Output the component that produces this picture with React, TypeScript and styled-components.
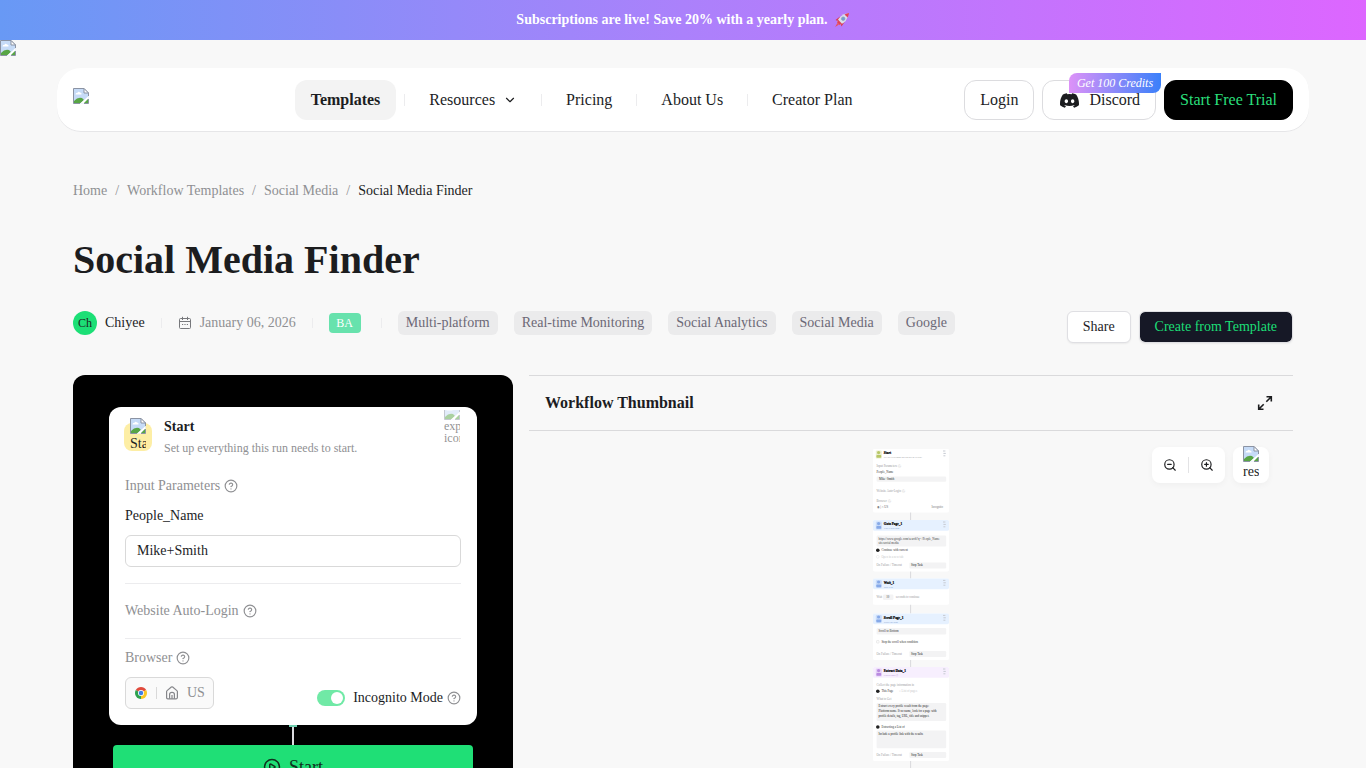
import React from "react";
import styled, { createGlobalStyle, css } from "styled-components";
import { ChevronDown, CircleHelp, ZoomIn, ZoomOut, CirclePlay } from "lucide-react";
import { BsDiscord } from "react-icons/bs";

const GlobalStyle = createGlobalStyle`
  *, *::before, *::after { box-sizing: border-box; }
  html { scrollbar-width: none; }
  body {
    margin: 0;
    background: #f8f8f8;
    color: #1c1d1f;
    font-family: "Liberation Serif", serif;
    font-size: 14px;
    line-height: 22px;
  }
  button, input { font-family: inherit; font-size: inherit; color: inherit; }
  button { cursor: pointer; }
  a { color: inherit; text-decoration: none; }
  svg { display: block; flex: none; }
`;

/* ---------- page frame ---------- */

const Banner = styled.a`
  display: flex;
  align-items: center;
  justify-content: center;
  gap: 6px;
  height: 40px;
  background: linear-gradient(90deg, #6899f5 0%, #ab81fb 50%, #dd66ff 100%);
  color: #fff;
  font-weight: 700;
`;

const PageBackdrop = styled.div`
  height: 16px;
`;

const Container = styled.div`
  width: 100%;
  max-width: 1252px;
  margin: 0 auto;
`;

const Header = styled.header`
  display: flex;
  align-items: center;
  justify-content: space-between;
  height: 64px;
  margin-top: 12px;
  padding: 0 16px;
  border-radius: 24px;
  background: #fff;
  box-shadow: inset 0 -1px 0 #e6e6e8;
`;

const Logo = styled.a`
  width: 126px;
  padding-bottom: 8px;
`;

const Nav = styled.nav`
  display: flex;
  align-items: center;
  gap: 8px;
  font-size: 16px;
`;

const NavLink = styled.a<{ $active?: boolean }>`
  display: flex;
  align-items: center;
  gap: 8px;
  height: 40px;
  padding: 0 16px;
  border-radius: 12px;
  white-space: nowrap;
  ${(p) => p.$active && css`
    background: #f3f3f3;
    font-weight: 700;
  `}
`;

const Divider = styled.span<{ $height: number; $color?: string }>`
  flex: none;
  width: 1px;
  height: ${(p) => p.$height}px;
  background: ${(p) => p.$color ?? "#ececee"};
`;

const HeaderActions = styled.div`
  display: flex;
  gap: 8px;
`;

const HeaderButton = styled.button<{ $primary?: boolean }>`
  position: relative;
  display: flex;
  align-items: center;
  gap: 8px;
  height: 40px;
  padding: 0 15px;
  border: 1px solid ${(p) => (p.$primary ? "#000" : "#dcdcdf")};
  border-radius: 12px;
  background: ${(p) => (p.$primary ? "#000" : "#fff")};
  color: ${(p) => (p.$primary ? "#2adf7b" : "#1c1d1f")};
  font-size: 16px;
  white-space: nowrap;
`;

const DiscordMark = styled.span`
  display: flex;
  justify-content: center;
  width: 23px;
`;

const CreditBadge = styled.span`
  position: absolute;
  top: -8px;
  right: -6px;
  padding: 0 8px;
  border-radius: 8px 0 8px 0;
  background: linear-gradient(90deg, #dd92f8, #3a80fa);
  color: #fff;
  font-size: 12px;
  font-style: italic;
  line-height: 20px;
`;

/* ---------- heading ---------- */

const Main = styled.main`
  padding: 48px 16px 0;
`;

const Breadcrumb = styled.nav`
  display: flex;
  gap: 8px;
  color: #8f9093;
`;

const Current = styled.span`
  color: #1c1d1f;
`;

const Title = styled.h1`
  margin: 34px 0 27px;
  font-size: 40px;
  line-height: 48px;
`;

const MetaRow = styled.div`
  display: flex;
  justify-content: space-between;
  align-items: flex-start;
  gap: 16px;
`;

const Meta = styled.div`
  display: flex;
  align-items: center;
  gap: 16px;
  white-space: nowrap;
`;

const Author = styled.a`
  display: flex;
  align-items: center;
  gap: 8px;
`;

const Avatar = styled.span`
  width: 24px;
  border-radius: 50%;
  background: #1cdf76;
  font-size: 12px;
  line-height: 24px;
  text-align: center;
`;

const PublishDate = styled.span`
  display: flex;
  align-items: center;
  gap: 8px;
  color: #8f9093;
`;

const Level = styled.span`
  width: 32px;
  margin-right: 4px;
  border-radius: 4px;
  background: #67e2ad;
  color: #fff;
  font-size: 12px;
  line-height: 20px;
  text-align: center;
`;

const Tag = styled.a`
  padding: 0 8px;
  border-radius: 6px;
  background: #ebebec;
  color: #6b6876;
  line-height: 24px;
`;

const PageActions = styled.div`
  display: flex;
  gap: 8px;
`;

const ActionButton = styled.button<{ $dark?: boolean }>`
  height: 32px;
  padding: 0 15px;
  border: 1px solid #dfdfe3;
  border-radius: 6px;
  background: ${(p) => (p.$dark ? "#161826" : "#fff")};
  background-clip: ${(p) => (p.$dark ? "padding-box" : "border-box")};
  box-shadow: 0 1px 2px rgba(0, 0, 0, 0.06);
  color: ${(p) => (p.$dark ? "#1cdf76" : "#1c1d1f")};
  white-space: nowrap;
`;

/* ---------- run panel ---------- */

const Columns = styled.div`
  display: grid;
  grid-template-columns: 440px minmax(0, 1fr);
  gap: 16px;
  margin-top: 32px;
`;

const RunPanel = styled.section`
  display: flex;
  flex-direction: column;
  align-items: center;
  padding: 32px 36px;
  border-radius: 12px;
  background: #000;
`;

const RunCard = styled.div`
  width: 100%;
  padding: 0 16px 16px;
  border-radius: 12px;
  background: #fff;
`;

const CardHeader = styled.div`
  display: flex;
  justify-content: space-between;
  height: 68px;
`;

const CardHeading = styled.div`
  display: flex;
  align-items: flex-start;
  gap: 12px;
  margin-left: -1px;
  padding-top: 10px;
`;

const StepIcon = styled.span`
  display: flex;
  flex-direction: column;
  align-items: center;
  justify-content: center;
  width: 28px;
  height: 28px;
  margin-top: 6px;
  padding-bottom: 2px;
  border-radius: 8px;
  background: #fdeea5;
`;

const AltText = styled.span`
  flex: none;
  width: 16px;
  overflow: hidden;
  line-height: 20px;
`;

const ExpandIcon = styled.span`
  display: flex;
  flex-direction: column;
  justify-content: flex-end;
  width: 16px;
  height: 34px;
  margin: 3px 1px 0 0;
  overflow: hidden;
  opacity: 0.5;
  font-size: 12px;
  line-height: 12px;
`;

const CardTitle = styled.h2`
  margin: 0;
  font-size: 14px;
  line-height: 20px;
`;

const CardSubtitle = styled.p`
  margin: 0;
  color: #8f9093;
  font-size: 12px;
  line-height: 22px;
`;

const Caption = styled.div`
  display: flex;
  align-items: center;
  gap: 4px;
  color: #8f9093;
`;

const FieldLabel = styled.label`
  display: block;
  margin: 8px 0;
`;

const TextField = styled.input`
  width: 100%;
  height: 32px;
  padding: 0 11px;
  border: 1px solid #d9d9d9;
  border-radius: 6px;
  background: #fff;
`;

const Rule = styled.hr<{ $after: number }>`
  height: 1px;
  margin: 16px 0 ${(p) => p.$after}px;
  border: 0;
  background: #ececee;
`;

const BrowserRow = styled.div`
  display: flex;
  justify-content: space-between;
  margin-top: 8px;
`;

const BrowserButton = styled.button`
  display: flex;
  align-items: center;
  gap: 8px;
  height: 32px;
  padding: 0 8px;
  border: 1px solid #d9d9d9;
  border-radius: 6px;
  background: #fafafa;
  color: #8f9093;
`;

const Incognito = styled.label`
  display: flex;
  align-items: center;
  gap: 8px;
  margin-top: 10px;
  height: 22px;
`;

const IncognitoText = styled.span`
  display: flex;
  align-items: center;
  gap: 4px;
  svg { color: #8f9093; }
`;

const Switch = styled.input`
  appearance: none;
  display: flex;
  align-items: center;
  justify-content: flex-end;
  width: 28px;
  height: 16px;
  margin: 0;
  padding: 2px;
  border-radius: 8px;
  background: #70e9a6;
  &::before {
    content: "";
    width: 12px;
    height: 12px;
    border-radius: 50%;
    background: #fff;
  }
`;

const Connector = styled.div`
  display: flex;
  flex-direction: column;
  align-items: center;
  height: 20px;
  &::before {
    content: "";
    width: 8px;
    height: 2px;
    background: #6fcfb0;
  }
  &::after {
    content: "";
    flex: 1;
    width: 2px;
    background: #dcdce0;
  }
`;

const StartButton = styled.button`
  display: flex;
  align-items: center;
  justify-content: center;
  gap: 8px;
  width: calc(100% - 8px);
  height: 44px;
  border: 0;
  border-radius: 4px;
  background: #1fdf76;
  color: #10301e;
  font-size: 18px;
`;

/* ---------- thumbnail panel ---------- */

const ThumbHeader = styled.div`
  display: flex;
  align-items: center;
  justify-content: space-between;
  height: 56px;
  padding: 0 20px 0 16px;
  border: solid #dadadc;
  border-width: 1px 0;
`;

const ThumbTitle = styled.h2`
  margin: 0;
  font-size: 16px;
`;

const IconButton = styled.button`
  display: flex;
  padding: 0;
  border: 0;
  background: none;
`;

const Canvas = styled.div`
  position: relative;
  display: flex;
  justify-content: center;
  padding-top: 16px;
`;

const CanvasTools = styled.div`
  position: absolute;
  top: 16px;
  right: 24px;
  display: flex;
  gap: 8px;
`;

const ToolBox = styled.div`
  display: flex;
  align-items: center;
  gap: 11px;
  height: 36px;
  padding: 0 11px;
  border-radius: 8px;
  background: #fff;
  box-shadow: 0 2px 6px rgba(0, 0, 0, 0.04);
`;

const ResetButton = styled.button`
  display: flex;
  flex-direction: column;
  align-items: center;
  justify-content: center;
  width: 36px;
  height: 36px;
  padding: 0 0 2px;
  border: 0;
  border-radius: 8px;
  background: #fff;
  box-shadow: 0 2px 6px rgba(0, 0, 0, 0.04);
  font-size: 14px;
`;

/* ---------- drawings ---------- */

const MissingImage = () => (
  <svg width="16" height="16" viewBox="0 0 16 16" aria-hidden="true">
    <path d="M0.5 0.5H11L15.5 5V15.5H0.5Z" fill="#c3d8f4" />
    <path d="M1 1H10.5V5.5H15V8L8 15H1Z" fill="#c6dbf7" />
    <path d="M2.5 6.5Q2.5 4.5 4.5 4.8Q5.5 3 7 4.5Q9 4.5 8.5 6.5Z" fill="#fff" />
    <path d="M1 15V13Q5 8.5 9 10L11 12L8 15Z" fill="#58a545" />
    <path d="M15.5 8V10.5L11 15.5H7Z" fill="#fff" />
    <path d="M11 15L15 11V15Z" fill="#58a545" />
    <path d="M0.5 15.5V0.5H11L15.5 5V8M0.5 15.5H7M11 15.5H15.5V11" fill="none" stroke="#8b93a3" />
    <path d="M11 0.5V5H15.5Z" fill="#fff" stroke="#8b93a3" />
  </svg>
);

const Rocket = () => (
  <svg width="16" height="16" viewBox="0 0 16 16" aria-hidden="true">
    <path d="M6 4.5L1.5 8L4.5 9.5ZM11 9.5L7.5 14.5L6.5 11.5Z" fill="#d93a55" />
    <path d="M4 10L1 15L6 12Z" fill="#e5506a" />
    <path d="M3 10.5Q4.5 3 14.5 1Q13.5 10.5 5.5 13Z" fill="#d9dfec" />
    <path d="M10.5 2.4Q13 1.3 15 1Q14.8 3.4 13.6 5.5Z" fill="#e0415a" />
    <path d="M3 10.5L5.5 13L8 11.8L4.2 7.8Z" fill="#e0415a" />
    <circle cx="9.2" cy="6.7" r="1.8" fill="#6f9fd6" stroke="#8697ad" strokeWidth="0.6" />
  </svg>
);

const CalendarIcon = () => (
  <svg width="14" height="14" viewBox="0 0 14 14" fill="none" stroke="#77787c" aria-hidden="true">
    <rect x="1.5" y="2.5" width="11" height="10" rx="1" />
    <path d="M1.5 5.5H12.5M4.5 0.8V4M9.5 0.8V4" />
    <path d="M4 8.5H10" strokeDasharray="1.2 1.2" />
  </svg>
);

const HouseIcon = () => (
  <svg width="14" height="14" viewBox="0 0 14 14" fill="none" stroke="#85868a" strokeWidth="1.2" aria-hidden="true">
    <path d="M1.6 5.6Q1.6 5 2.1 4.6L6.3 1.1Q7 0.6 7.7 1.1L11.9 4.6Q12.4 5 12.4 5.6V11.6Q12.4 12.8 11.2 12.8H2.8Q1.6 12.8 1.6 11.6Z" />
    <path d="M4.6 12.8V8.4Q4.6 6.4 7 6.4Q9.4 6.4 9.4 8.4V12.8M7 9V12.8" />
  </svg>
);

const ChromeIcon = () => (
  <svg width="14" height="14" viewBox="-0.5 -0.5 15 15" aria-hidden="true">
    <path d="M7 7L1.4 3.8A6.5 6.5 0 0 1 12.6 3.8Z" fill="#e04a3c" />
    <path d="M7 7L12.6 3.8A6.5 6.5 0 0 1 7 13.5Z" fill="#fbc625" />
    <path d="M7 7V13.5A6.5 6.5 0 0 1 1.4 3.8Z" fill="#2da24f" />
    <circle cx="7" cy="7" r="3.2" fill="#fff" />
    <circle cx="7" cy="7" r="2.4" fill="#3f7fe8" />
  </svg>
);

const ExpandArrows = () => (
  <svg width="16" height="16" viewBox="0 0 16 16" fill="none" stroke="#1c1d1f" strokeWidth="1.6" aria-hidden="true">
    <path d="M9.5 1.7H14.3V6.5M14.3 1.7L9.3 6.7M6.5 14.3H1.7V9.5M1.7 14.3L6.7 9.3" />
  </svg>
);

const Help = () => <CircleHelp size={14} strokeWidth={2} aria-hidden="true" />;

/* ---------- workflow drawing ---------- */

type Tone = "plain" | "blue" | "violet";
const tones: Record<Tone, { head: string; icon: string; sub: string }> = {
  plain: { head: "#ffffff", icon: "#b8c766", sub: "#9a9a9a" },
  blue: { head: "#e6f1ff", icon: "#86a9e8", sub: "#7d9bd0" },
  violet: { head: "#f7effe", icon: "#b98ae0", sub: "#ad86cf" },
};

const Node = ({ y, h, tone, name, sub, children }: {
  y: number; h: number; tone: Tone; name: string; sub: string; children?: React.ReactNode;
}) => (
  <g transform={`translate(5 ${y})`}>
    <rect width="380" height={h} rx="8" fill="#fff" />
    <rect width="380" height="54" rx="8" fill={tones[tone].head} />
    <rect x="14" y="8" width="30" height="40" rx="6" fill={tones[tone].icon} opacity="0.3" />
    <circle cx="28" cy="18" r="8" fill={tones[tone].icon} />
    <rect x="17" y="30" width="24" height="14" rx="4" fill={tones[tone].icon} />
    <text x="54" y="27" fontSize="17" fontWeight="700" fill="#000" stroke="#000" strokeWidth="1">{name}</text>
    <text x="54" y="46" fontSize="12" fill={tones[tone].sub}>{sub}</text>
    <path d="M350 10H362M352 22H364M352 34H362" fill="none" stroke="#c6cad2" strokeWidth="5" />
    {children}
  </g>
);

const Line = ({ x = 18, y, fill = "#9a9a9e", children }: { x?: number; y: number; fill?: string; children: React.ReactNode }) => (
  <text x={x} y={y} fontSize="15" fill={fill}>{children}</text>
);

const Box = ({ x = 18, y, w = 348, h }: { x?: number; y: number; w?: number; h: number }) => (
  <rect x={x} y={y} width={w} height={h} rx="6" fill="#f3f3f4" />
);

const FailureRow = ({ y }: { y: number }) => (
  <>
    <Line y={y + 20}>On Failure / Timeout</Line>
    <Box x={182} y={y} w={184} h={30} />
    <Line x={190} y={y + 20} fill="#222">Stop Task</Line>
  </>
);

const WorkflowDrawing = () => (
  <svg width="80" height="400" viewBox="-5 -5 400 2000" role="img" aria-label="Workflow diagram">
    <path d="M193 320V1995" stroke="#d0d1d4" strokeWidth="4" />
    <Node y={5} h={318} tone="plain" name="Start" sub="Set up everything this run needs to start.">
      <Line y={90}>Input Parameters ⓘ</Line>
      <Line y={122} fill="#333">People_Name</Line>
      <Box y={138} h={26} />
      <Line x={30} y={156} fill="#222">Mike+Smith</Line>
      <Line y={217}>Website Auto-Login ⓘ</Line>
      <Line y={267}>Browser ⓘ</Line>
      <Line y={297} fill="#66676b">◉ | ⌂ US</Line>
      <Line x={292} y={297} fill="#77787c">Incognito</Line>
    </Node>
    <Node y={360} h={257} tone="blue" name="Goto Page_1" sub="Visit a web page">
      <Box y={78} h={54} />
      <Line x={28} y={100} fill="#444">https://www.google.com/search?q=  /People_Name</Line>
      <Line x={28} y={122} fill="#444">site:social media</Line>
      <circle cx="24" cy="151" r="9" fill="#222" />
      <Line x={42} y={156} fill="#333">Continue with current</Line>
      <circle cx="24" cy="184" r="7" fill="none" stroke="#dcdcdc" strokeWidth="2" />
      <Line x={42} y={189} fill="#c8c8ca">Open in a new tab</Line>
      <FailureRow y={212} />
    </Node>
    <Node y={652} h={132} tone="blue" name="Wait_1" sub="Wait a bit">
      <Line y={98}>Wait</Line>
      <Box x={50} y={80} w={52} h={28} />
      <Line x={66} y={98} fill="#444">10</Line>
      <Line x={114} y={98}>seconds to continue</Line>
    </Node>
    <Node y={827} h={233} tone="blue" name="Scroll Page_1" sub="Scroll the page">
      <Box y={73} h={32} />
      <Line x={28} y={94} fill="#333">Scroll to Bottom</Line>
      <rect x="18" y="136" width="12" height="12" rx="2" fill="none" stroke="#ccc" strokeWidth="2" />
      <Line x={42} y={148} fill="#333">Stop the scroll when condition</Line>
      <FailureRow y={188} />
    </Node>
    <Node y={1095} h={470} tone="violet" name="Extract Data_1" sub="Collect data ⓘ">
      <Line y={95}>Collect the page information in</Line>
      <circle cx="24" cy="121" r="9" fill="#222" />
      <Line x={42} y={126} fill="#333">This Page</Line>
      <Line x={130} y={126} fill="#c8c8ca">○ List of pages</Line>
      <Line y={166}>What to Get</Line>
      <Box y={180} h={90} />
      <Line x={28} y={202} fill="#222">Extract every profile result from the page:</Line>
      <Line x={28} y={227} fill="#222">Platform name. If no name, look for a page with</Line>
      <Line x={28} y={252} fill="#222">profile details, tag, URL, title and snippet.</Line>
      <circle cx="24" cy="300" r="9" fill="#222" />
      <Line x={42} y={305} fill="#333">Extracting a List of</Line>
      <Box y={318} h={88} />
      <Line x={28} y={342} fill="#222">Include a profile link with the results</Line>
      <FailureRow y={425} />
    </Node>
  </svg>
);

/* ---------- page ---------- */

const tags = ["Multi-platform", "Real-time Monitoring", "Social Analytics", "Social Media", "Google"];

export default function App() {
  return (
    <>
      <GlobalStyle />
      <Banner href="#plans">
        <span>Subscriptions are live! Save 20% with a yearly plan.</span>
        <Rocket />
      </Banner>
      <PageBackdrop><MissingImage /></PageBackdrop>
      <Container>
        <Header>
          <Logo href="#home" aria-label="Home"><MissingImage /></Logo>
          <Nav>
            <NavLink href="#templates" $active>Templates</NavLink>
            <Divider $height={12} />
            <NavLink href="#resources">Resources <ChevronDown size={14} /></NavLink>
            <Divider $height={12} />
            <NavLink href="#pricing">Pricing</NavLink>
            <Divider $height={12} />
            <NavLink href="#about">About Us</NavLink>
            <Divider $height={12} />
            <NavLink href="#creators">Creator Plan</NavLink>
          </Nav>
          <HeaderActions>
            <HeaderButton>Login</HeaderButton>
            <HeaderButton>
              <DiscordMark><BsDiscord size={19} /></DiscordMark>
              Discord
              <CreditBadge>Get 100 Credits</CreditBadge>
            </HeaderButton>
            <HeaderButton $primary>Start Free Trial</HeaderButton>
          </HeaderActions>
        </Header>

        <Main>
          <Breadcrumb aria-label="Breadcrumb">
            <a href="#home">Home</a>
            <span>/</span>
            <a href="#templates">Workflow Templates</a>
            <span>/</span>
            <a href="#social">Social Media</a>
            <span>/</span>
            <Current>Social Media Finder</Current>
          </Breadcrumb>

          <Title>Social Media Finder</Title>

          <MetaRow>
            <Meta>
              <Author href="#author"><Avatar>Ch</Avatar>Chiyee</Author>
              <Divider $height={10} />
              <PublishDate><CalendarIcon />January 06, 2026</PublishDate>
              <Divider $height={10} />
              <Level>BA</Level>
              <Divider $height={10} />
              {tags.map((tag) => <Tag href="#tag" key={tag}>{tag}</Tag>)}
            </Meta>
            <PageActions>
              <ActionButton>Share</ActionButton>
              <ActionButton $dark>Create from Template</ActionButton>
            </PageActions>
          </MetaRow>

          <Columns>
            <RunPanel>
              <RunCard>
                <CardHeader>
                  <CardHeading>
                    <StepIcon><MissingImage /><AltText>Start</AltText></StepIcon>
                    <div>
                      <CardTitle>Start</CardTitle>
                      <CardSubtitle>Set up everything this run needs to start.</CardSubtitle>
                    </div>
                  </CardHeading>
                  <ExpandIcon><MissingImage /><span>exp</span><span>icon</span></ExpandIcon>
                </CardHeader>
                <Caption>Input Parameters <Help /></Caption>
                <FieldLabel htmlFor="people-name">People_Name</FieldLabel>
                <TextField id="people-name" defaultValue="Mike+Smith" />
                <Rule $after={16} />
                <Caption>Website Auto-Login <Help /></Caption>
                <Rule $after={8} />
                <Caption>Browser <Help /></Caption>
                <BrowserRow>
                  <BrowserButton>
                    <ChromeIcon />
                    <Divider $height={12} $color="#d9d9d9" />
                    <HouseIcon />
                    US
                  </BrowserButton>
                  <Incognito>
                    <Switch type="checkbox" role="switch" defaultChecked />
                    <IncognitoText>Incognito Mode <Help /></IncognitoText>
                  </Incognito>
                </BrowserRow>
              </RunCard>
              <Connector />
              <StartButton><CirclePlay size={18} />Start</StartButton>
            </RunPanel>

            <section>
              <ThumbHeader>
                <ThumbTitle>Workflow Thumbnail</ThumbTitle>
                <IconButton aria-label="Expand"><ExpandArrows /></IconButton>
              </ThumbHeader>
              <Canvas>
                <WorkflowDrawing />
                <CanvasTools>
                  <ToolBox>
                    <IconButton aria-label="Zoom out"><ZoomOut size={14} /></IconButton>
                    <Divider $height={16} $color="#e3e3e5" />
                    <IconButton aria-label="Zoom in"><ZoomIn size={14} /></IconButton>
                  </ToolBox>
                  <ResetButton><MissingImage /><AltText>reset</AltText></ResetButton>
                </CanvasTools>
              </Canvas>
            </section>
          </Columns>
        </Main>
      </Container>
    </>
  );
}
